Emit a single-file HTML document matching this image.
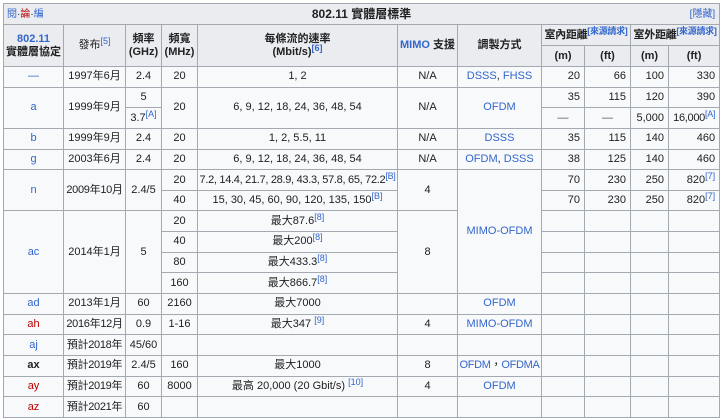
<!DOCTYPE html>
<html><head><meta charset="utf-8"><style>
html,body{margin:0;padding:0;background:#fff;}
body{font-family:"Liberation Sans","Noto Sans CJK TC",sans-serif;font-size:11px;color:#202122;}
table{position:absolute;left:3px;top:3px;border-collapse:collapse;table-layout:fixed;width:716px;background:#f8f9fa;}
td,th{border:1px solid #a2a9b1;text-align:center;padding:0 1px;white-space:nowrap;overflow:hidden;line-height:13px;}
th{background:#eaecf0;font-weight:bold;}
tbody tr{height:20.65px;}
a{color:#3366cc;text-decoration:none;}
.r{color:#ba0000;}
.n{text-align:right;padding-right:4px;}
sup{font-size:9px;color:#3366cc;line-height:0;vertical-align:4px;}
.t{letter-spacing:-0.3px;}
</style></head><body>
<table>
<colgroup><col style="width:60px"><col style="width:62px"><col style="width:36px"><col style="width:36px"><col style="width:200px"><col style="width:60px"><col style="width:84px"><col style="width:43px"><col style="width:46px"><col style="width:38px"><col style="width:51px"></colgroup>
<thead>
<tr style="height:21px"><th colspan="11" style="font-size:12px;position:relative"><span style="position:absolute;left:3px;top:4px;font-weight:normal;font-size:10px"><a>閱</a>·<a class="r">論</a>·<a>編</a></span>802.11 實體層標準<span style="position:absolute;right:4px;top:4px;font-weight:normal;font-size:10px"><a>[隱藏]</a></span></th></tr>
<tr style="height:21px"><th rowspan="2"><a>802.11</a><br>實體層協定</th><th rowspan="2" style="font-weight:normal">發布<sup>[5]</sup></th><th rowspan="2">頻率<br>(GHz)</th><th rowspan="2">頻寬<br>(MHz)</th><th rowspan="2">每條流的速率<br>(Mbit/s)<sup>[6]</sup></th><th rowspan="2"><a>MIMO</a> 支援</th><th rowspan="2">調製方式</th><th colspan="2" class="t">室內距離<sup>[來源請求]</sup></th><th colspan="2" class="t">室外距離<sup>[來源請求]</sup></th></tr>
<tr style="height:21px"><th>(m)</th><th>(ft)</th><th>(m)</th><th>(ft)</th></tr>
</thead>
<tbody>
<tr><td><a>—</a></td><td>1997年6月</td><td>2.4</td><td>20</td><td>1, 2</td><td>N/A</td><td><a>DSSS</a>, <a>FHSS</a></td><td class="n">20</td><td class="n">66</td><td class="n">100</td><td class="n">330</td></tr>
<tr><td rowspan="2"><a>a</a></td><td rowspan="2">1999年9月</td><td>5</td><td rowspan="2">20</td><td rowspan="2">6, 9, 12, 18, 24, 36, 48, 54</td><td rowspan="2">N/A</td><td rowspan="2"><a>OFDM</a></td><td class="n">35</td><td class="n">115</td><td class="n">120</td><td class="n">390</td></tr>
<tr><td>3.7<sup>[A]</sup></td><td style="color:#555">—</td><td style="color:#555">—</td><td class="n">5,000</td><td class="n t">16,000<sup>[A]</sup></td></tr>
<tr><td><a>b</a></td><td>1999年9月</td><td>2.4</td><td>20</td><td>1, 2, 5.5, 11</td><td>N/A</td><td><a>DSSS</a></td><td class="n">35</td><td class="n">115</td><td class="n">140</td><td class="n">460</td></tr>
<tr><td><a>g</a></td><td>2003年6月</td><td>2.4</td><td>20</td><td>6, 9, 12, 18, 24, 36, 48, 54</td><td>N/A</td><td><a>OFDM</a>, <a>DSSS</a></td><td class="n">38</td><td class="n">125</td><td class="n">140</td><td class="n">460</td></tr>
<tr><td rowspan="2"><a>n</a></td><td rowspan="2" class="t">2009年10月</td><td rowspan="2">2.4/5</td><td>20</td><td class="t">7.2, 14.4, 21.7, 28.9, 43.3, 57.8, 65, 72.2<sup>[B]</sup></td><td rowspan="2">4</td><td rowspan="6"><a>MIMO-OFDM</a></td><td class="n">70</td><td class="n">230</td><td class="n">250</td><td class="n">820<sup>[7]</sup></td></tr>
<tr><td>40</td><td>15, 30, 45, 60, 90, 120, 135, 150<sup>[B]</sup></td><td class="n">70</td><td class="n">230</td><td class="n">250</td><td class="n">820<sup>[7]</sup></td></tr>
<tr><td rowspan="4"><a>ac</a></td><td rowspan="4">2014年1月</td><td rowspan="4">5</td><td>20</td><td>最大87.6<sup>[8]</sup></td><td rowspan="4">8</td><td></td><td></td><td></td><td></td></tr>
<tr><td>40</td><td>最大200<sup>[8]</sup></td><td></td><td></td><td></td><td></td></tr>
<tr><td>80</td><td>最大433.3<sup>[8]</sup></td><td></td><td></td><td></td><td></td></tr>
<tr><td>160</td><td>最大866.7<sup>[8]</sup></td><td></td><td></td><td></td><td></td></tr>
<tr><td><a>ad</a></td><td>2013年1月</td><td>60</td><td>2160</td><td>最大7000</td><td></td><td><a>OFDM</a></td><td></td><td></td><td></td><td></td></tr>
<tr><td><a class="r">ah</a></td><td class="t">2016年12月</td><td>0.9</td><td>1-16</td><td>最大347 <sup>[9]</sup></td><td>4</td><td><a>MIMO-OFDM</a></td><td></td><td></td><td></td><td></td></tr>
<tr><td><a>aj</a></td><td class="t">預計2018年</td><td>45/60</td><td></td><td></td><td></td><td></td><td></td><td></td><td></td><td></td></tr>
<tr><td><b>ax</b></td><td class="t">預計2019年</td><td>2.4/5</td><td>160</td><td>最大1000</td><td>8</td><td class="t"><a>OFDM</a>，<a>OFDMA</a></td><td></td><td></td><td></td><td></td></tr>
<tr><td><a class="r">ay</a></td><td class="t">預計2019年</td><td>60</td><td>8000</td><td>最高 20,000 (20 Gbit/s) <sup>[10]</sup></td><td>4</td><td><a>OFDM</a></td><td></td><td></td><td></td><td></td></tr>
<tr><td><a class="r">az</a></td><td class="t">預計2021年</td><td>60</td><td></td><td></td><td></td><td></td><td></td><td></td><td></td><td></td></tr>
</tbody>
</table>
</body></html>
